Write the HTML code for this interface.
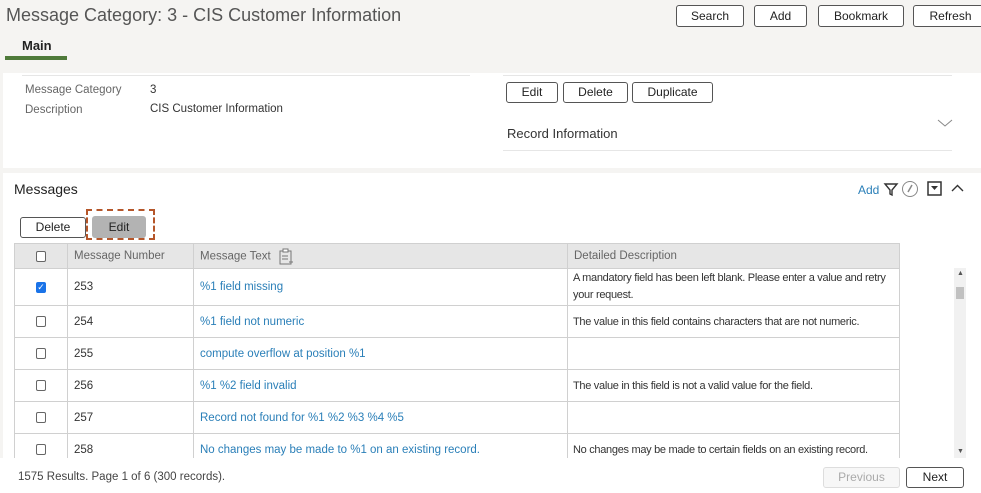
<!DOCTYPE html>
<html><head><meta charset="utf-8"><style>
*{box-sizing:border-box;margin:0;padding:0}
body{width:981px;height:493px;overflow:hidden;background:#f5f4f2;font-family:"Liberation Sans",sans-serif;color:#333;position:relative;font-size:12px}
.a{position:absolute}
.btn{position:absolute;border:1px solid #555;border-radius:3px;background:#fff;font-size:12px;text-align:center;color:#222}
.lbl{color:#666;font-size:11.5px}
a,.lnk{color:#2a7fb8;text-decoration:none}
table{position:absolute;left:14px;top:243px;width:886px;border-collapse:collapse;font-size:11.5px;table-layout:fixed}
td,th{border:1px solid #d0d0d0;padding:0 6px;text-align:left;vertical-align:middle;white-space:nowrap;overflow:hidden}
td.d{font-size:11px;letter-spacing:-0.3px;padding-left:5px}
th{background:#e6e6e6;font-weight:normal;color:#666;height:25px}
.cb{display:block;margin:0 auto;width:10px;height:11px;border:1px solid #666;border-radius:2px;background:#fff}
.ck{background:#1a73e8;border-color:#1a73e8;color:#fff;font-size:9px;line-height:9px;text-align:center}
</style></head><body>
<div class="a" style="left:6px;top:5px;font-size:18px;color:#555">Message Category: 3 - CIS Customer Information</div>
<div class="btn" style="left:676px;top:5px;width:68px;height:22px;line-height:20px">Search</div>
<div class="btn" style="left:754px;top:5px;width:53px;height:22px;line-height:20px">Add</div>
<div class="btn" style="left:818px;top:5px;width:86px;height:22px;line-height:20px">Bookmark</div>
<div class="btn" style="left:913px;top:5px;width:75px;height:22px;line-height:20px">Refresh</div>
<div class="a" style="left:22px;top:38px;font-size:13px;font-weight:bold;color:#222">Main</div>
<div class="a" style="left:5px;top:56px;width:62px;height:4px;background:#4f7a3a"></div>
<div class="a" style="left:3px;top:73px;width:978px;height:95px;background:#fff"></div>
<div class="a" style="left:22px;top:75px;width:448px;height:1px;background:#e6e6e6"></div>
<div class="a" style="left:503px;top:75px;width:449px;height:1px;background:#e6e6e6"></div>
<div class="a lbl" style="left:25px;top:84px">Message Category</div>
<div class="a" style="left:150px;top:84px;font-size:11.5px">3</div>
<div class="a lbl" style="left:25px;top:104px">Description</div>
<div class="a" style="left:150px;top:103px;font-size:11.5px">CIS Customer Information</div>
<div class="btn" style="left:506px;top:82px;width:52px;height:21px;line-height:19px">Edit</div>
<div class="btn" style="left:563px;top:82px;width:65px;height:21px;line-height:19px">Delete</div>
<div class="btn" style="left:632px;top:82px;width:81px;height:21px;line-height:19px">Duplicate</div>
<div class="a" style="left:507px;top:126px;font-size:13px;color:#333">Record Information</div>
<svg class="a" style="left:937px;top:118px" width="16" height="10"><path d="M1 2 L8 8 L15 2" stroke="#888" fill="none"/></svg>
<div class="a" style="left:503px;top:150px;width:449px;height:1px;background:#e6e6e6"></div>
<div class="a" style="left:3px;top:173px;width:978px;height:320px;background:#fff"></div>
<div class="a" style="left:14px;top:181px;font-size:14px;color:#222">Messages</div>
<div class="a lnk" style="left:858px;top:183px;font-size:12px">Add</div>
<svg class="a" style="left:883px;top:181px" width="16" height="16"><path d="M2 3 H14 L9 9 V14 L7 13 V9 Z" stroke="#333" stroke-width="1.4" fill="none"/></svg>
<svg class="a" style="left:901px;top:180px" width="18" height="18"><circle cx="9" cy="9" r="7.5" stroke="#888" fill="none"/><path d="M7 12 L11 5" stroke="#888" stroke-width="1.5"/></svg>
<svg class="a" style="left:927px;top:181px" width="15" height="15"><rect x="1" y="1" width="13" height="13" stroke="#333" stroke-width="1.5" fill="none"/><path d="M4 5 H11 L7.5 9 Z" fill="#333"/></svg>
<svg class="a" style="left:951px;top:184px" width="13" height="9"><path d="M1 7 L6.5 1.5 L12 7" stroke="#333" stroke-width="1.4" fill="none"/></svg>
<div class="btn" style="left:20px;top:217px;width:66px;height:21px;line-height:19px">Delete</div>
<div class="a" style="left:86px;top:209px;width:69px;height:31px;border:2px dashed #b5562a"></div>
<div class="a" style="left:92px;top:216px;width:54px;height:22px;line-height:22px;background:#b3b3b3;border-radius:3px;text-align:center;font-size:12px;color:#222">Edit</div>
<table>
<colgroup><col style="width:53px"><col style="width:126px"><col style="width:374px"><col></colgroup>
<tr><th><span class="cb"></span></th><th>Message Number</th><th>Message Text <svg width="16" height="17" style="vertical-align:middle;margin-left:4px"><rect x="2" y="3" width="11" height="13" stroke="#777" fill="none"/><rect x="5" y="1" width="5" height="3" stroke="#777" fill="#fff"/><path d="M4 8h6M4 11h6M11 14h4M13 12v4" stroke="#777"/></svg></th><th>Detailed Description</th></tr>
<tr style="height:37px"><td><span class="cb ck">✓</span></td><td>253</td><td><a>%1 field missing</a></td><td class="d" style="line-height:17px;white-space:normal">A mandatory field has been left blank. Please enter a value and retry your request.</td></tr>
<tr style="height:32px"><td><span class="cb"></span></td><td>254</td><td><a>%1 field not numeric</a></td><td class="d">The value in this field contains characters that are not numeric.</td></tr>
<tr style="height:32px"><td><span class="cb"></span></td><td>255</td><td><a>compute overflow at position %1</a></td><td></td></tr>
<tr style="height:32px"><td><span class="cb"></span></td><td>256</td><td><a>%1 %2 field invalid</a></td><td class="d">The value in this field is not a valid value for the field.</td></tr>
<tr style="height:32px"><td><span class="cb"></span></td><td>257</td><td><a>Record not found for %1 %2 %3 %4 %5</a></td><td></td></tr>
<tr style="height:32px"><td><span class="cb"></span></td><td>258</td><td><a>No changes may be made to %1 on an existing record.</a></td><td class="d">No changes may be made to certain fields on an existing record.</td></tr>
</table>
<div class="a" style="left:0;top:458px;width:981px;height:35px;background:#fff"></div>
<div class="a" style="left:954px;top:268px;width:12px;height:190px;background:#f1f1f1"></div>
<div class="a" style="left:956px;top:287px;width:8px;height:12px;background:#c1c1c1"></div>
<div class="a" style="left:957px;top:270px;font-size:7px;color:#555">▲</div>
<div class="a" style="left:957px;top:448px;font-size:7px;color:#555">▼</div>
<div class="a" style="left:18px;top:471px;font-size:11.5px;color:#444">1575 Results. Page 1 of 6 (300 records).</div>
<div class="btn" style="left:823px;top:467px;width:77px;height:21px;line-height:19px;border-color:#ddd;color:#aaa;background:#f7f7f7">Previous</div>
<div class="btn" style="left:906px;top:467px;width:58px;height:21px;line-height:19px">Next</div>
</body></html>
